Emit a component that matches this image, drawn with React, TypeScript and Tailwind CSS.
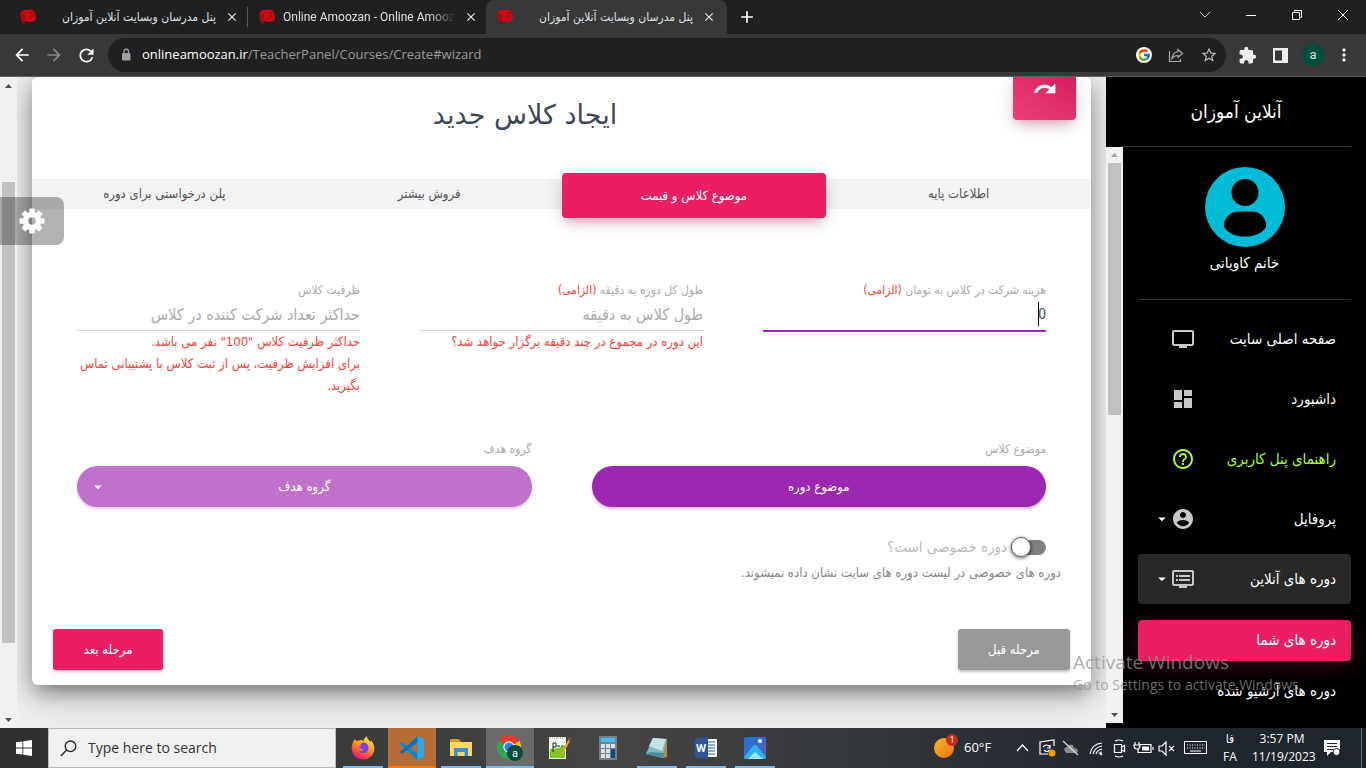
import type { ReactNode } from "react";
import { FcGoogle } from "react-icons/fc";
import {
  MdAdd,
  MdArrowBack,
  MdArrowForward,
  MdArrowDropDown,
  MdClose,
  MdDashboard,
  MdDvr,
  MdExtension,
  MdHelpOutline,
  MdMoreVert,
  MdRefresh,
  MdStarBorder,
  MdTv,
} from "react-icons/md";

const FAVICON = (
  <svg viewBox="0 0 16 16" className="size-4 shrink-0" aria-hidden="true">
    <path d="M1 3 4 1l8-.5L15 3l1 6-1 3-5 1-6-1-2 3-1-6-1-3Z" fill="#cf0a10" />
    <path d="M0 4l5 1v6l-3 1-1-2Z" fill="#a50d12" />
    <path d="M2 12l3 0-1 4-2-2Z" fill="#7d1013" />
    <path d="M10 4l5-.5M11 6l-1 4M13 5v3" stroke="#7d1013" strokeWidth=".8" />
  </svg>
);

const TEETH = [0, 45, 90, 135, 180, 225, 270, 315];

function BrowserTab({ title, active, rtl }: { title: string; active?: boolean; rtl?: boolean }) {
  return (
    <div
      className={
        "flex h-[34px] items-center gap-2 pl-[11px] " +
        (active ? "w-[241px] rounded-t-lg bg-[#383838] pr-2.5" : "w-[238px] pr-[7px]")
      }
    >
      {FAVICON}
      <span
        dir={rtl ? "rtl" : "ltr"}
        className={
          "min-w-0 flex-1 overflow-hidden text-xs whitespace-nowrap text-[#dfe1e5] " +
          (rtl
            ? "font-['DejaVu_Sans_Condensed','DejaVu_Sans',sans-serif]"
            : "mask-r-from-85% font-['Roboto',sans-serif]")
        }
      >
        {title}
      </span>
      <button aria-label="Close tab" className="flex size-4 items-center justify-center text-[#e8eaed]">
        <MdClose size={14} />
      </button>
    </div>
  );
}

function Browser() {
  return (
    <header className="shrink-0 bg-[#202020] text-white">
      <div className="flex h-[34px] items-center pl-[9px]">
        <BrowserTab title="پنل مدرسان وبسایت آنلاین آموزان" rtl />
        <div className="h-5 w-px bg-[#5a5a5a]" />
        <BrowserTab title="Online Amoozan - Online Amoozan" />
        <BrowserTab title="پنل مدرسان وبسایت آنلاین آموزان" rtl active />
        <button aria-label="New tab" className="ml-2 flex size-6 items-center justify-center">
          <MdAdd size={20} />
        </button>
        <div className="mb-1 ml-auto flex">
          <button aria-label="Search tabs" className="flex w-[46px] justify-center">
            <svg width="12" height="12" fill="none" stroke="#ccc"><path d="m1 3 5 5 5-5" /></svg>
          </button>
          <button aria-label="Minimize" className="flex w-[46px] justify-center">
            <svg width="12" height="12" stroke="#fff"><path d="M1 6.500h10" /></svg>
          </button>
          <button aria-label="Restore" className="flex w-[46px] justify-center">
            <svg width="12" height="12" fill="none" stroke="#fff"><path d="M1.500 3.500h7v7h-7zM3.500 3.500v-2h7v7h-2" /></svg>
          </button>
          <button aria-label="Close" className="flex w-[46px] justify-center">
            <svg width="12" height="12" stroke="#fff"><path d="m1 1 10 10M11 1 1 11" /></svg>
          </button>
        </div>
      </div>
      <div className="flex h-[43px] items-center border-b border-[#606060] bg-[#383838] pr-3 pl-3">
        <button aria-label="Back" className="w-8"><MdArrowBack size={20} /></button>
        <button aria-label="Forward" className="w-8 text-[#888]"><MdArrowForward size={20} /></button>
        <button aria-label="Reload" className="w-8"><MdRefresh size={21} /></button>
        <div className="flex h-[34px] flex-1 items-center rounded-full bg-[#202020] pr-2 pl-3">
          <svg width="12" height="14" viewBox="0 0 12 14">
            <rect x="2" y="5" width="8.500" height="7.500" rx="1" fill="#9aa0a6" />
            <path d="M4 5V3.500a2.200 2.200 0 0 1 4.500 0V5" fill="none" stroke="#9aa0a6" strokeWidth="1.300" />
          </svg>
          <p className="ml-2.5 flex-1 font-['Open_Sans',sans-serif] text-[13px] text-[#9a9a9a]">
            <span className="text-white">onlineamoozan.ir</span>/TeacherPanel/Courses/Create#wizard
          </p>
          <span className="mr-4 flex size-4 items-center justify-center rounded-full bg-white"><FcGoogle size={14} /></span>
          <svg width="16" height="16" viewBox="0 0 16 16" fill="none" stroke="#aaa" strokeWidth="1.200" className="mr-4">
            <path d="M1.500 4v10.500h11V12" />
            <path d="M10 2.500 14.500 6.500 10 10.500V8.500C7.500 8.500 5.500 9.500 4 11.500 4.500 7.500 7 5 10 4.500Z" />
          </svg>
          <MdStarBorder size={18} className="text-[#bbb]" />
        </div>
        <div className="flex items-center pl-3 text-[#eee]">
          <MdExtension size={19} />
          <svg width="15" height="15" className="ml-4"><path d="M0 0h15v15H0zM2 2.500v10h7v-10z" fillRule="evenodd" fill="#eee" /></svg>
          <span className="ml-3.5 flex size-[22px] items-center justify-center rounded-full bg-[#004d40] font-['Roboto',sans-serif] text-[13px] text-[#cfe8e2]">a</span>
          <button aria-label="Menu" className="ml-2.5"><MdMoreVert size={20} /></button>
        </div>
      </div>
    </header>
  );
}

function AccountIcon() {
  return (
    <svg width="24" height="24" viewBox="0 0 24 24" fill="currentColor">
      <path d="M12 2C6.480 2 2 6.480 2 12s4.480 10 10 10 10-4.480 10-10S17.520 2 12 2zm0 3c1.660 0 3 1.340 3 3s-1.340 3-3 3-3-1.340-3-3 1.340-3 3-3zm0 14.200c-2.500 0-4.710-1.280-6-3.220.030-1.990 4-3.080 6-3.080 1.990 0 5.970 1.090 6 3.080-1.290 1.940-3.500 3.220-6 3.220z" />
    </svg>
  );
}

function NavItem({ label, icon, caret, lime, open }: { label: string; icon: ReactNode; caret?: boolean; lime?: boolean; open?: boolean }) {
  return (
    <a
      href="#nav"
      className={
        "mb-2.5 flex h-[50px] items-center rounded px-[15px] " +
        (lime ? "text-[#a6ff2f] " : "text-white ") +
        (open ? "bg-[#282828]" : "")
      }
    >
      <span className="flex-1 text-[15px]">{label}</span>
      <span className={lime ? "" : "text-[#c8c8c8]"}>{icon}</span>
      <span className="flex w-[18px] shrink-0 justify-end">{caret && <MdArrowDropDown size={18} />}</span>
    </a>
  );
}

function Sidebar() {
  return (
    <aside className="flex w-[260px] shrink-0 flex-col bg-black text-white">
      <div className="mx-[15px] flex h-[70px] shrink-0 items-center justify-center border-b border-[#3a3a3a]">
        <h2 dir="rtl" className="text-[19px]">آنلاین آموزان</h2>
      </div>
      <div className="mb-[5px] flex min-h-0 flex-1">
        <div className="flex w-[17px] shrink-0 flex-col items-center justify-between bg-[#f1f1f1] py-1.5">
          <svg width="7" height="4"><path d="M0 4 3.500 0 7 4Z" fill="#a3a3a3" /></svg>
          <div className="mt-1.5 mb-auto h-[252px] w-[13px] bg-[#c1c1c1]" />
          <svg width="7" height="4"><path d="M0 0 3.500 4 7 0Z" fill="#505050" /></svg>
        </div>
        <nav dir="rtl" className="min-w-0 flex-1 overflow-hidden px-[15px]">
          <div className="mb-3.5 flex h-[153px] flex-col items-center border-b border-[#333] pt-5">
            <svg width="80" height="80" viewBox="0 0 80 80" className="shrink-0">
              <circle cx="40" cy="40" r="40" fill="#00bcd7" />
              <circle cx="40" cy="25.500" r="13.500" fill="#000" />
              <path d="M34 44.500H47C55 44.500 61 50.500 61 58V60C57 66.500 49 69.600 40 69.600S23 66.500 19 60V58C19 50.500 26 44.500 34 44.500Z" fill="#000" />
            </svg>
            <p className="mt-1 text-[15px] leading-6">خانم کاویانی</p>
          </div>
          <NavItem label="صفحه اصلی سایت" icon={<MdTv size={24} />} />
          <NavItem label="داشبورد" icon={<MdDashboard size={24} />} />
          <NavItem label="راهنمای پنل کاربری" icon={<MdHelpOutline size={24} />} lime />
          <NavItem label="پروفایل" icon={<AccountIcon />} caret />
          <NavItem label="دوره های آنلاین" icon={<MdDvr size={24} />} caret open />
          <a href="#mine" className="mt-4 flex h-[41px] items-center rounded bg-[#e91e63] px-[15px] text-[15px] shadow-[0_4px_20px_rgba(233,30,99,0.25)]">دوره های شما</a>
          <a href="#archive" className="mt-2.5 flex h-[41px] items-center px-[15px] text-[15px]">دوره های آرشیو شده</a>
        </nav>
      </div>
    </aside>
  );
}

function Field({ id, label, required, placeholder, value, help }: {
  id: string; label: string; required?: boolean; placeholder?: string; value?: string; help?: ReactNode;
}) {
  return (
    <div className="flex-1">
      <label htmlFor={id} className="block h-[18px] text-xs leading-5 text-[#aaa]">
        {label} {required && <span className="text-[#f44336]">(الزامی)</span>}
      </label>
      <div className="relative">
        <input
          id={id}
          defaultValue={value}
          placeholder={placeholder}
          className={
            "w-full bg-transparent outline-none placeholder:text-[#aaa] " +
            (value
              ? "h-[34px] border-b-2 border-[#9c27b0] font-['Roboto','DejaVu_Sans_Condensed',sans-serif] text-sm text-[#495057]"
              : "h-[33px] border-b border-[#d2d2d2] text-base")
          }
        />
        {value && <span className="absolute top-1 right-[7px] h-6 w-px bg-black" />}
      </div>
      {help && <p className="text-[13px] leading-[22px] text-[#f44336]">{help}</p>}
    </div>
  );
}

function CourseCard() {
  return (
    <form
      dir="rtl"
      className="mx-[15px] rounded-md bg-white shadow-[0_10px_30px_rgba(0,0,0,0.3),0_4px_25px_rgba(0,0,0,0.12),0_10px_16px_-6px_rgba(0,0,0,0.22)]"
    >
      <div className="flex h-[96px] px-[15px]">
        <div className="flex h-[43px] w-[63px] justify-center rounded-b bg-linear-to-bl from-[#d81b60] to-[#ec407a] shadow-[0_4px_20px_rgba(0,0,0,0.14),0_7px_10px_-5px_rgba(233,30,99,0.4)]">
          <svg width="24" height="24" viewBox="0 0 24 24" fill="#fff" stroke="#fff" strokeWidth=".7">
            <path d="M18.400 10.600C16.550 8.990 14.150 8 11.500 8c-4.650 0-8.580 3.030-9.960 7.220L3.900 16c1.050-3.190 4.050-5.500 7.600-5.500 1.950 0 3.730.720 5.120 1.880L13 16h9V7l-3.600 3.600z" />
          </svg>
        </div>
        <h1 className="flex-1 pt-5 pr-2.5 text-center font-['DejaVu_Sans',sans-serif] text-[27px] leading-9 text-[#3c4858]">ایجاد کلاس جدید</h1>
      </div>
      <div className="mt-1.5 flex h-[30px] items-start bg-[#f3f3f3] text-[13px] text-[#555]">
        <button type="button" className="h-[30px] flex-1">اطلاعات پایه</button>
        <button type="button" className="-mt-1.5 h-[45px] flex-1 rounded bg-[#e91e63] text-white shadow-[0_4px_20px_rgba(0,0,0,0.14),0_7px_10px_-5px_rgba(233,30,99,0.4)]">موضوع کلاس و قیمت</button>
        <button type="button" className="h-[30px] flex-1">فروش بیشتر</button>
        <button type="button" className="h-[30px] flex-1">پلن درخواستی برای دوره</button>
      </div>
      <div className="px-[45px] pt-[71px]">
        <div className="flex h-[160px] gap-[60px]">
          <Field id="price" label="هزینه شرکت در کلاس به تومان" required value="0" />
          <Field id="length" label="طول کل دوره به دقیقه" required placeholder="طول کلاس به دقیقه" help="این دوره در مجموع در چند دقیقه برگزار خواهد شد؟" />
          <Field id="capacity" label="ظرفیت کلاس" placeholder="حداکثر تعداد شرکت کننده در کلاس" help={<>حداکثر ظرفیت کلاس "100" نفر می باشد.<br />برای افزایش ظرفیت، پس از ثبت کلاس با پشتیبانی تماس بگیرید.</>} />
        </div>
        <div className="flex gap-[60px] text-[13px]">
          <div className="flex-1">
            <p className="h-[26px] text-xs leading-[18px] text-[#aaa]">موضوع کلاس</p>
            <button type="button" className="h-[41px] w-full rounded-full bg-[#9c27b0] text-white shadow-[0_2px_3px_rgba(156,39,176,0.35)]">موضوع دوره</button>
          </div>
          <div className="flex-1">
            <p className="h-[26px] text-xs leading-[18px] text-[#aaa]">گروه هدف</p>
            <button type="button" className="flex h-[41px] w-full items-center rounded-full bg-[#bf71cc] pr-[30px] pl-3 text-white shadow-[0_2px_3px_rgba(156,39,176,0.25)]">
              <span className="flex-1">گروه هدف</span>
              <MdArrowDropDown size={18} />
            </button>
          </div>
        </div>
        <label className="mt-[30px] flex h-5 items-center gap-1 text-[15px] text-[#bbb]">
          <input type="checkbox" className="peer sr-only" />
          <span className="flex h-[15px] w-[35px] items-center justify-end rounded-full bg-[#808080]">
            <span className="size-5 shrink-0 rounded-full border border-[#666] bg-white shadow-[0_1px_3px_1px_rgba(0,0,0,0.4)]" />
          </span>
          دوره خصوصی است؟
        </label>
      </div>
      <p className="px-[30px] pt-1.5 text-[13px] leading-5 text-[#888]">دوره های خصوصی در لیست دوره های سایت نشان داده نمیشوند.</p>
      <div className="flex justify-between px-[21px] pt-[46px] pb-[15px] text-[13px] text-white">
        <button type="button" className="h-[41px] w-[112px] rounded-[3px] bg-[#999] shadow-[0_2px_3px_rgba(0,0,0,0.25)]">مرحله قبل</button>
        <button type="button" className="h-[41px] w-[110px] rounded-[3px] bg-[#e91e63] shadow-[0_2px_3px_rgba(233,30,99,0.3)]">مرحله بعد</button>
      </div>
    </form>
  );
}

function TaskApp({ label, children, tone, line }: { label: string; children: ReactNode; tone?: string; line?: string }) {
  return (
    <button aria-label={label} className={"flex h-10 w-12 flex-col items-center " + (tone ?? "")}>
      <span className="flex flex-1 items-center justify-center pt-0.5">{children}</span>
      <span className={"h-0.5 " + (line ?? "w-10 bg-[#76b9ed]")} />
    </button>
  );
}

function Taskbar() {
  return (
    <footer className="flex h-10 shrink-0 items-center bg-linear-to-r from-[#2e2f31] via-[#454545] via-45% to-[#1f252d] to-85% font-['Open_Sans',sans-serif] text-white">
      <button aria-label="Start" className="flex w-12 justify-center">
        <svg width="16" height="16" fill="#fff"><path d="M0 2.300 6.500 1.400V7.600H0ZM7.300 1.300 16 0V7.600H7.300ZM0 8.400H6.500V14.600L0 13.700ZM7.300 8.400H16V16L7.300 14.700Z" /></svg>
      </button>
      <label className="flex h-10 w-[288px] items-center border border-[#bbb] bg-[#f0f0f0] pl-[11px]">
        <svg width="17" height="17" fill="none" stroke="#222" strokeWidth="1.300"><circle cx="10.500" cy="6.300" r="5.300" /><path d="M6.600 10 .8 16" /></svg>
        <input aria-label="Search" placeholder="Type here to search" className="ml-[11px] w-56 bg-transparent text-sm outline-none placeholder:text-[#333]" />
      </label>
      <div className="ml-[3px] flex gap-px">
        <TaskApp label="Firefox">
          <svg width="24" height="24" viewBox="0 0 24 24">
            <defs><linearGradient id="ff" x1=".8" y1="0" x2=".3" y2="1"><stop offset="0" stopColor="#fff44f" /><stop offset=".45" stopColor="#ff9a1f" /><stop offset=".8" stopColor="#ff3b50" /><stop offset="1" stopColor="#e31587" /></linearGradient></defs>
            <path d="M2.500 5C3 4 4 3.500 4.200 3 4.500 4.500 5.500 5 6.500 5.200 8 4 9 4 10 4 11 4 12 4.500 12.500 5 13 3 14.500 1.500 15.500 0c.5 3 3 4.500 4 6 .5 0 .5-1 .3-2 2.500 3 3.700 6 3.500 9-.3 6-5 10.500-11.300 10.500S.7 18.500.7 12.500C.7 9.500 1.500 7 2.500 5Z" fill="url(#ff)" />
            <path d="M9 8.500c2-2 5-2.500 7-.5 2 2 2 6-.5 8-3 2-7 1-8-1.500 2 1 4 .5 5-1-2-.5-4-1-4.500-3l3-.5Z" fill="#7542e5" />
          </svg>
        </TaskApp>
        <TaskApp label="Visual Studio Code" tone="bg-[#b56d35]" line="w-12 bg-[#ff7b00]">
          <svg width="24" height="24" viewBox="0 0 24 24"><path d="M17.500 0 7 9.800 2.300 6.300 0 7.500v1L17.500 24V17.500L10 12l7.500-5.500Z" fill="#1287cf" /><path d="M0 15.500v1l2.300 1.200L17.500 6V0L10 7.800Z" fill="#0b70b8" /><path d="M17.500 0 24 3v18l-6.500 3Z" fill="#2aa5ef" /></svg>
        </TaskApp>
        <TaskApp label="File Explorer">
          <svg width="22" height="20"><path d="M0 2q0-1 1-1h8l2 3H0Z" fill="#d99a16" /><path d="M0 4h22v14H0Z" fill="#ffd767" /><path d="M4 18v-7q0-1 1-1h12q1 0 1 1v7h-3.500v-4h-7v4Z" fill="#3b8edb" /></svg>
        </TaskApp>
        <TaskApp label="Chrome" tone="bg-[#6b6b6b]" line="w-12 bg-[#76b9ed]">
          <svg width="26" height="26" viewBox="0 0 26 26" fontFamily="Roboto"><path d="M12 12 1.600 6A12 12 0 0 1 22.400 6Z" fill="#e33b2e" /><path d="M12 12 22.400 6A12 12 0 0 1 12 24Z" fill="#fbc116" /><path d="M12 12V24A12 12 0 0 1 1.600 6Z" fill="#2da94f" /><circle cx="12" cy="12" r="5.700" fill="#fff" /><circle cx="12" cy="12" r="4.600" fill="#3a7cec" /><circle cx="18" cy="18" r="8" fill="#064c40" /><text x="18" y="22" fontSize="11" fill="#fff" textAnchor="middle">a</text></svg>
        </TaskApp>
        <TaskApp label="Notepad++" line="w-0">
          <svg width="23" height="24"><path d="M1 1h17v22H1Z" fill="#f8fbf2" /><path d="M2 13q8 0 15-4v13H2Z" fill="#7cc61f" /><path d="M2 2h15" stroke="#999" strokeDasharray="1 1" /><path d="M5 7v9M5 7h3v4H5M9 10h3M13 10h2" stroke="#222" fill="none" /><path d="m13 18 7-14 2 1-7 13-2 1Z" fill="#e9a32d" /><path d="m20 4 1-3 2 1-1 3Z" fill="#b54837" /></svg>
        </TaskApp>
        <TaskApp label="Calculator" line="w-0">
          <svg width="18" height="24"><rect width="18" height="24" rx="1" fill="#75808b" /><path d="M2 2h14v4H2Z" fill="#38c2ef" /><path d="M2 8h4v4H2ZM7 8h4v4H7ZM12 8h4v4h-4ZM2 13h4v4H2ZM7 13h4v4H7ZM2 18h4v4H2ZM7 18h4v4H7Z" fill="#dce1e5" /><path d="M12 13h4v9h-4Z" fill="#124987" /></svg>
        </TaskApp>
        <TaskApp label="Notepad">
          <svg width="24" height="24"><path d="M19 3h3v18l-5 1Z" fill="#b28b4f" /><path d="M8 2 21 3 18 22 1 18Z" fill="#7fb9c4" /><path d="M8 2 21 3 17 15 4 10Z" fill="#c4e3e8" /><path d="m1 18 4-2 14 1-1 5Z" fill="#4a8c99" /></svg>
        </TaskApp>
        <TaskApp label="Word">
          <svg width="24" height="24" fontFamily="Open Sans"><path d="M11 3h12v18H11Z" fill="#fff" /><path d="M14 6h7M14 9h7M14 12h7M14 15h7M14 18h7" stroke="#2b579a" /><path d="m1 3 13-2v22L1 21Z" fill="#2b579a" /><text x="7" y="16" fontSize="10" fontWeight="700" fill="#fff" textAnchor="middle">W</text></svg>
        </TaskApp>
        <TaskApp label="Photos">
          <svg width="22" height="22"><defs><linearGradient id="ph" x2="1" y2="1"><stop stopColor="#1677d8" /><stop offset="1" stopColor="#6757b7" /></linearGradient></defs><rect width="22" height="22" rx="2" fill="url(#ph)" /><path d="M0 20 9 9q2-2 4 0l9 11q0 2-2 2H2q-2 0-2-2Z" fill="#2ab4ed" /><path d="m4 22 7-7 8 7Z" fill="#9be7fb" /><circle cx="16" cy="4" r="2" fill="#fff" /></svg>
        </TaskApp>
      </div>
      <div className="ml-auto flex items-center">
        <span className="relative mr-2.5">
          <span className="block size-5 rounded-full bg-linear-to-br from-[#f2b927] to-[#f26a12]" />
          <span className="absolute -top-1 -right-1 flex size-3 items-center justify-center rounded-full bg-[#c42b1c] text-[9px]">1</span>
        </span>
        <span className="w-[52px] text-[13px]">60°F</span>
        <svg width="168" height="20" viewBox="0 0 168 20" fill="none" stroke="#fff" strokeWidth="1.200">
          <path d="m1 13 5.500-6 5.500 6" />
          <path d="M38 8V2l-14 2v12h8M27 9q4-4 7 0m0-2v3h-3M34 12q-3 3-6 0" /><circle cx="36" cy="15" r="3.500" fill="#ff9800" stroke="none" />
          <path d="M50 15h10q3-1 1-4-1-1-3-1-1-5-5-3-1 1-2 2-5 1-1 6Z" fill="#8b8b8b" stroke="none" /><path d="m47 3 15 14" stroke="#ddd" />
          <path d="M74 16q2-10 12-11M77 16q2-7 9-8M80 16q1-4 6-5M83 16q1-2 3-2" /><circle cx="85" cy="16" r="1.200" fill="#fff" stroke="none" />
          <path d="M98.500 6.500h7v8h-7zM105.500 9l3-1.500v6l-3-1.500M99 3q4-2 8 0M99 18q4 2 8 0" />
          <path d="M124 6.500h11v8h-13v-4M137 9v3M119 4v3M123 4v3M118 7h6q0 4-3 4t-3-4Z" /><path d="M126 8.500h7v4h-7Z" fill="#fff" stroke="none" />
          <path d="M143 8h3l4-4v13l-4-4h-3ZM153 8l5 5M158 8l-5 5" />
        </svg>
        <svg width="24" height="14" fill="none" stroke="#fff"><path d="M.5.500h22v12H.5z" /><path d="M3 4h18M3 7h18" strokeDasharray="1 1.500" /><path d="M6 10h11" /></svg>
        <div className="w-[44px] text-center text-xs leading-[18px]"><p className="font-['DejaVu_Sans_Condensed',sans-serif]">فا</p><p>FA</p></div>
        <div className="w-[60px] text-center text-xs leading-[18px] whitespace-nowrap"><p>3:57 PM</p><p>11/19/2023</p></div>
        <svg width="17" height="17" className="ml-3"><path d="M0 0h16v12h-9l-4 4v-4H0Z" fill="#fff" /><path d="M3 3.500h10M3 6.500h10M3 9.500h6" stroke="#222" /><circle cx="12.500" cy="12" r="3.500" fill="#fff" stroke="#222" /></svg>
        <span className="mr-1 ml-5 h-10 w-px bg-[#69707a]" />
      </div>
    </footer>
  );
}

export default function App() {
  return (
    <div className="relative flex h-screen flex-col overflow-hidden font-['DejaVu_Sans_Condensed','DejaVu_Sans',sans-serif]">
      <Browser />
      <div className="relative flex min-h-0 flex-1">
        <div className="flex w-[17px] shrink-0 flex-col items-center bg-[#f1f1f1] pt-[7px] pb-[6px]">
          <svg width="7" height="4"><path d="M0 4 3.500 0 7 4Z" fill="#505050" /></svg>
          <div className="mt-[94px] mb-auto h-[461px] w-[13px] bg-[#c1c1c1]" />
          <svg width="7" height="4"><path d="M0 0 3.500 4 7 0Z" fill="#505050" /></svg>
        </div>
        <main className="min-w-0 flex-1 overflow-hidden bg-[#eee]">
          <CourseCard />
        </main>
        <Sidebar />
        <button aria-label="Settings" className="absolute top-[120px] left-0 flex h-12 w-16 items-center justify-center rounded-r-lg bg-black/30 text-white">
          <svg width="26" height="26" viewBox="-13 -13 26 26">
            <circle r="6.500" fill="none" stroke="#fff" strokeWidth="5.500" />
            {TEETH.map((angle) => (
              <rect key={angle} x="-2.800" y="-12.500" width="5.600" height="5" rx="1" fill="#fff" transform={`rotate(${angle})`} />
            ))}
          </svg>
        </button>
      </div>
      <Taskbar />
      <div className="pointer-events-none absolute right-[59px] bottom-[72px] w-[234px] font-['Open_Sans',sans-serif] whitespace-nowrap text-[#919191]/75">
        <p className="text-[19px] leading-6">Activate Windows</p>
        <p className="text-sm leading-[22px]">Go to Settings to activate Windows.</p>
      </div>
    </div>
  );
}
